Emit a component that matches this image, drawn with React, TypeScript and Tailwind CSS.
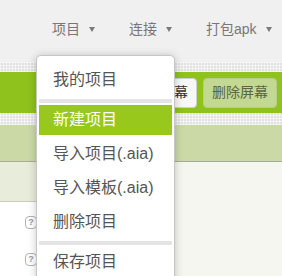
const FONT = "font-['Liberation_Sans','Noto_Sans_CJK_SC',sans-serif]"

const TEXTURE =
  '[background-image:repeating-linear-gradient(0deg,rgba(255,255,255,0.55)_0_1px,transparent_1px_3px),repeating-linear-gradient(90deg,rgba(255,255,255,0.55)_0_1px,transparent_1px_3px)]'

function Caret() {
  return (
    <svg width="6" height="5" viewBox="0 0 6 5" className="ml-[9px] mt-[1px]">
      <path d="M0 0h6L3 5z" fill="#7a7a7a" />
    </svg>
  )
}

function HelpIcon() {
  return (
    <div className="w-[12px] h-[13px] rounded-[4px] border border-[#b4b4b4] flex items-center justify-center text-[9px] font-bold leading-none text-[#9a9a9a]">
      ?
    </div>
  )
}

const TOP_MENU = ['项目', '连接', '打包apk']

type MenuItem = { label: string; active?: boolean } | 'sep'

const ITEMS: MenuItem[] = [
  { label: '我的项目' },
  'sep',
  { label: '新建项目', active: true },
  { label: '导入项目(.aia)' },
  { label: '导入模板(.aia)' },
  { label: '删除项目' },
  'sep',
  { label: '保存项目' },
]

export default function App() {
  return (
    <div className={`relative w-[282px] h-[276px] overflow-hidden bg-[#f6f6f0] ${FONT}`}>
      {/* top menu bar */}
      <div className="h-[62px] bg-[#f0f0f0] flex items-center pl-[52px] gap-[34px] pb-[4px]">
        {TOP_MENU.map((m) => (
          <div key={m} className="flex items-center text-[14px] text-[#777] whitespace-nowrap">
            {m}
            <Caret />
          </div>
        ))}
      </div>

      <div className={`h-[10px] bg-[#e2e2e2] ${TEXTURE}`} />

      {/* green toolbar */}
      <div className="h-[41px] bg-[#8fc21d] flex items-center justify-end gap-[6px] pr-[5px]">
        <button className="h-[30px] px-[8px] rounded-[4px] border border-[#d0d0d0] bg-[#f7f7f7] text-[14px] text-[#333]">
          添加屏幕
        </button>
        <button className="h-[30px] px-[8px] rounded-[4px] border border-[#b6cd82] bg-[#c3d993] text-[14px] text-[#5a6640]">
          删除屏幕
        </button>
      </div>

      <div className={`h-[12px] bg-[#e2e2e2] ${TEXTURE}`} />

      <div className="h-[37px] bg-[#cbd9a7] border-b border-[#a8aa9e]" />

      {/* content */}
      <div className="flex">
        <div className="w-[120px] bg-white h-[200px]">
          <div className="h-[40px] bg-[#e8ecda] border-b border-[#c9cbc2]" />
          <div className="pl-[25px] pt-[14px] flex flex-col gap-[24px]">
            <HelpIcon />
            <HelpIcon />
          </div>
        </div>
        <div className="flex-1" />
      </div>

      {/* dropdown */}
      <div className="absolute left-[36px] top-[55px] w-[139px] h-[240px] bg-white border border-[#c6c6c6] rounded-[5px] shadow-[0_1px_8px_rgba(0,0,0,0.22)] px-[2px] pt-[7px] flex flex-col">
        {ITEMS.map((it, i) =>
          it === 'sep' ? (
            <div key={i} className="h-[4px] mt-[2px] shrink-0 bg-[#e4e4e4]" />
          ) : (
            <div
              key={i}
              className={`h-[30px] my-[2px] shrink-0 flex items-center pl-[14px] text-[16px] whitespace-nowrap ${
                it.active ? 'bg-[#97c81b] text-white' : 'text-[#555]'
              }`}
            >
              {it.label}
            </div>
          ),
        )}
      </div>
    </div>
  )
}
